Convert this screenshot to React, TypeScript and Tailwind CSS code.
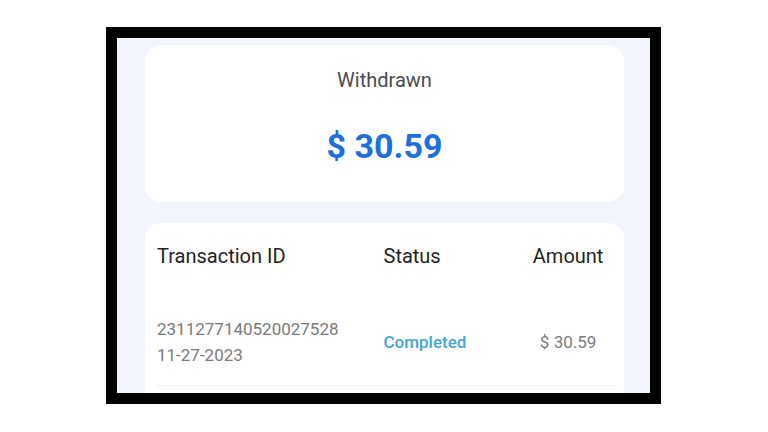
import React from "react";

export default function App() {
  return (
    <div className="w-[768px] h-[432px] bg-white overflow-hidden pl-[106px] pt-[27px]" style={{ fontFamily: "Roboto, 'Noto Sans', sans-serif" }}>
      <div className="w-[555px] h-[377px] border-[11px] border-black bg-[#f2f6fc] overflow-hidden pl-[28px] pr-[26px] pt-[7px] flex flex-col">
        <div className="h-[157px] shrink-0 rounded-[16px] bg-white flex flex-col items-center pt-[22px]">
          <div className="text-[20px] leading-[26px] text-[#474b55]">Withdrawn</div>
          <div className="mt-[33px] text-[34px] leading-[40px] font-bold text-[#1c6fdc]">$ 30.59</div>
        </div>
        <div className="mt-[21px] shrink-0 rounded-t-[16px] bg-white pl-[12px] pr-[9px] pt-[20px] h-[200px]">
          <div className="flex text-[20px] leading-[26px] text-[#1f1f1f]">
            <div className="w-[227px]">Transaction ID</div>
            <div className="w-[138px]">Status</div>
            <div className="w-[94px] text-center">Amount</div>
          </div>
          <div className="flex items-center mt-[47px] text-[17px] leading-[26px]">
            <div className="w-[227px] text-[#7a7a7a]">
              <div>2311277140520027528</div>
              <div>11-27-2023</div>
            </div>
            <div className="w-[138px] text-[#45a5d5] font-medium">Completed</div>
            <div className="w-[94px] text-center text-[#7b7b7b]">$ 30.59</div>
          </div>
          <div className="mt-[17px] h-px bg-[#eef0f3]" />
        </div>
      </div>
    </div>
  );
}
